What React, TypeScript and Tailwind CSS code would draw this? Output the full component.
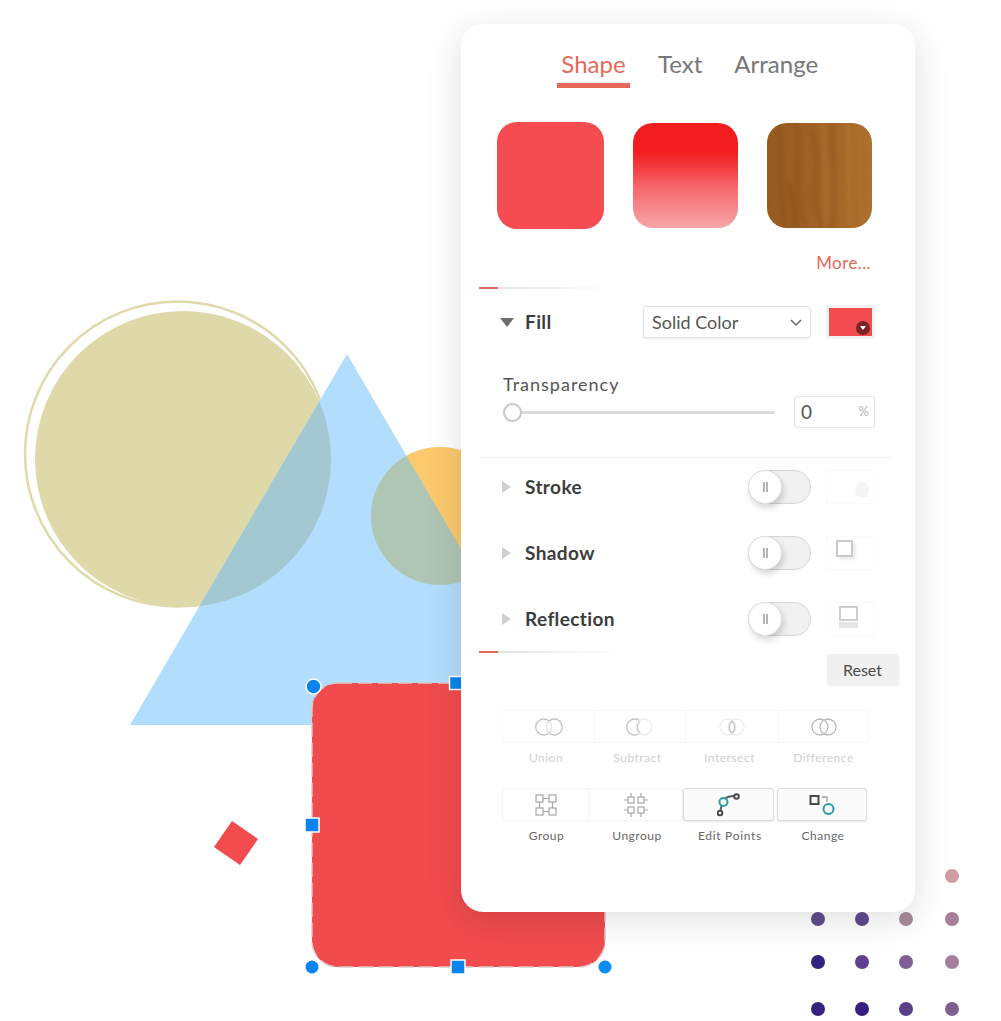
import { ReactNode } from "react";

const dots = [
  { x: 952, y: 876, c: "#cf9da2" },
  { x: 818, y: 919, c: "#5f4f8f" },
  { x: 862, y: 919, c: "#5f4a8e" },
  { x: 906, y: 919, c: "#a98a9a" },
  { x: 952, y: 919, c: "#a6809a" },
  { x: 818, y: 962, c: "#33227f" },
  { x: 862, y: 962, c: "#5f3f8f" },
  { x: 906, y: 962, c: "#7f5f95" },
  { x: 952, y: 962, c: "#a6809a" },
  { x: 818, y: 1009, c: "#35237f" },
  { x: 862, y: 1009, c: "#35207f" },
  { x: 906, y: 1009, c: "#5a4088" },
  { x: 952, y: 1009, c: "#80608f" },
];

function Canvas() {
  return (
    <svg className="absolute left-0 top-0" width="1001" height="1021" viewBox="0 0 1001 1021">
      <defs>
        <clipPath id="tri">
          <polygon points="347,354 564,725 130,725" />
        </clipPath>
      </defs>
      <circle cx="177.500" cy="454" r="152.500" fill="none" stroke="#e0d9aa" strokeWidth="2.500" />
      <circle cx="183" cy="459" r="148" fill="#dfd9a9" />
      <circle cx="440" cy="516" r="69" fill="#fcc96c" />
      <polygon points="347,354 564,725 130,725" fill="#b3ddfd" />
      <circle cx="183" cy="459" r="148" fill="#a3c8d2" clipPath="url(#tri)" />
      <circle cx="440" cy="516" r="69" fill="#b0c6b5" clipPath="url(#tri)" />
      <polygon points="232,821 258,839 240,865 214,847" fill="#f24c4f" />
      <rect x="312" y="683" width="293" height="284" rx="26" fill="#f14b4e" stroke="#d9c9c9" strokeWidth="1.500" strokeDasharray="14 6" />
      <circle cx="313.500" cy="686.500" r="7.500" fill="#0a84f0" stroke="#fff" strokeWidth="1.500" />
      <rect x="449.500" y="676.500" width="13" height="13" fill="#0a84f0" stroke="#fff" strokeWidth="1.500" />
      <rect x="305" y="818" width="14" height="14" fill="#0a84f0" stroke="#fff" strokeWidth="1.500" />
      <rect x="451" y="960" width="14" height="14" fill="#0a84f0" stroke="#fff" strokeWidth="1.500" />
      <circle cx="312" cy="967" r="6.500" fill="#0a84f0" />
      <circle cx="605" cy="967" r="6.500" fill="#0a8df5" />
      {dots.map((d) => (
        <circle key={`${d.x}-${d.y}`} cx={d.x} cy={d.y} r="7" fill={d.c} />
      ))}
    </svg>
  );
}

function WoodSwatch() {
  return (
    <svg width="105" height="105" viewBox="0 0 105 105" className="ml-[29px] rounded-[20px]">
      <defs>
        <linearGradient id="wood" x1="0" y1="0" x2="1" y2="0">
          <stop offset="0" stopColor="#955a20" />
          <stop offset="0.5" stopColor="#a06426" />
          <stop offset="1" stopColor="#ad702e" />
        </linearGradient>
        <filter id="soft">
          <feGaussianBlur stdDeviation="2" />
        </filter>
      </defs>
      <rect width="105" height="105" fill="url(#wood)" />
      <g filter="url(#soft)" fill="none" stroke="#85491a" strokeWidth="3" opacity="0.45">
        <path d="M12 0 C16 25 10 50 18 105" />
        <path d="M30 0 C34 20 24 55 38 105" />
        <path d="M44 5 C52 30 50 50 48 70 C47 85 52 95 55 105" />
        <path d="M66 0 C62 25 72 55 66 105" />
        <path d="M22 60 C26 75 30 90 28 105" strokeWidth="5" />
      </g>
      <g filter="url(#soft)" fill="none" stroke="#b97c38" strokeWidth="3" opacity="0.45">
        <path d="M56 0 C58 30 60 60 58 105" />
        <path d="M80 0 C84 30 78 70 84 105" />
        <path d="M92 10 C94 40 90 70 96 105" />
      </g>
    </svg>
  );
}

function RowLabel({ label, open }: { label: string; open?: boolean }) {
  return (
    <div className="flex items-center">
      {open ? (
        <span className="ml-[39px] h-0 w-0 border-x-[7px] border-t-[9px] border-x-transparent border-t-[#6e6e6e]" />
      ) : (
        <span className="ml-[41px] h-0 w-0 border-y-[6px] border-l-[9px] border-y-transparent border-l-[#cfcfcf]" />
      )}
      <span className={`${open ? "ml-[11px]" : "ml-[14px]"} pb-[2px] text-[19px] font-bold leading-none tracking-[0.4px] text-[#3c3c3c]`}>{label}</span>
    </div>
  );
}

function Toggle() {
  return (
    <div className="relative h-[34px] w-[63px] rounded-full border border-[#d6d6d6] bg-[#f1f1f1]">
      <div className="absolute -left-px -top-px flex h-[34px] w-[34px] items-center justify-center rounded-full border border-[#dedede] bg-white shadow-[2px_4px_6px_rgba(0,0,0,0.16)]">
        <span className="h-[10px] w-[5px] border-x-2 border-[#b5b5b5]" />
      </div>
    </div>
  );
}

function Preview({ children }: { children: ReactNode }) {
  return (
    <div className="ml-[15px] flex h-[34px] w-[49px] rounded-[2px] border border-[#f9f9f9]">
      {children}
    </div>
  );
}

function EffectRow({ label, children, className }: { label: string; children: ReactNode; className: string }) {
  return (
    <div className={`flex h-[34px] items-center justify-between pr-[40px] ${className}`}>
      <RowLabel label={label} />
      <div className="flex items-center">
        <Toggle />
        <Preview>{children}</Preview>
      </div>
    </div>
  );
}

function Divider({ width, className }: { width: string; className: string }) {
  return (
    <div className={`ml-[18px] flex h-[2px] ${width} ${className}`}>
      <div className="w-[19px] bg-[#e5685a]" />
      <div className="flex-1 bg-gradient-to-r from-[#e4e4e4] to-transparent" />
    </div>
  );
}

const T = "#c4c4c4";

function UnionIcon() {
  return (
    <svg width="28" height="18" viewBox="0 0 28 18" fill="none" stroke={T} strokeWidth="1.300">
      <path d="M14 3 A8 8 0 1 0 14 15 A8 8 0 1 0 14 3" />
      <path d="M14 3 A8 8 0 0 0 14 15 A8 8 0 0 0 14 3" stroke="#e2e2e2" />
    </svg>
  );
}

function SubtractIcon() {
  return (
    <svg width="28" height="18" viewBox="0 0 28 18" fill="none" stroke={T} strokeWidth="1.300">
      <path d="M14 3 A8 8 0 1 0 14 15 A8 8 0 0 1 14 3" />
      <circle cx="18" cy="9" r="8" stroke="#ececec" />
    </svg>
  );
}

function IntersectIcon() {
  return (
    <svg width="28" height="18" viewBox="0 0 28 18" fill="none" stroke="#ececec" strokeWidth="1.300">
      <circle cx="10" cy="9" r="8" />
      <circle cx="18" cy="9" r="8" />
      <path d="M14 3 A8 8 0 0 1 14 15 A8 8 0 0 1 14 3" stroke={T} />
    </svg>
  );
}

function DifferenceIcon() {
  return (
    <svg width="28" height="18" viewBox="0 0 28 18" fill="none" stroke="#b8b8b8" strokeWidth="1.300">
      <circle cx="10" cy="9" r="8" />
      <circle cx="18" cy="9" r="8" />
    </svg>
  );
}

function GroupIcon() {
  return (
    <svg width="22" height="22" viewBox="0 0 22 22" fill="none" stroke="#a6a6a6" strokeWidth="1.200">
      <rect x="1" y="1" width="7" height="7" />
      <rect x="14" y="1" width="7" height="7" />
      <rect x="1" y="14" width="7" height="7" />
      <rect x="14" y="14" width="7" height="7" />
      <path d="M8 4.500 H14 M8 17.500 H14 M4.500 8 V14 M17.500 8 V14" />
    </svg>
  );
}

function UngroupIcon() {
  return (
    <svg width="26" height="26" viewBox="0 0 26 26" fill="none" stroke="#a6a6a6" strokeWidth="1.200">
      <rect x="5" y="5" width="6" height="6" />
      <rect x="15" y="5" width="6" height="6" />
      <rect x="5" y="15" width="6" height="6" />
      <rect x="15" y="15" width="6" height="6" />
      <path d="M1 8 H5 M21 8 H25 M1 18 H5 M21 18 H25 M8 1 V5 M18 1 V5 M8 21 V25 M18 21 V25" />
    </svg>
  );
}

function EditPointsIcon() {
  return (
    <svg width="24" height="24" viewBox="0 0 24 24" fill="none" strokeWidth="2">
      <path d="M8 6 C10 4 14 3 17 3 M4.500 13 L3.500 17" stroke="#5b5b5b" />
      <circle cx="6.500" cy="9" r="4" stroke="#2c9aa5" />
      <circle cx="19.500" cy="3.500" r="2.300" stroke="#4a4a4a" />
      <circle cx="3" cy="20" r="2.300" stroke="#4a4a4a" />
    </svg>
  );
}

function ChangeIcon() {
  return (
    <svg width="26" height="22" viewBox="0 0 26 22" fill="none" strokeWidth="2">
      <rect x="1.500" y="2" width="8" height="8" stroke="#4a4a4a" />
      <path d="M13 3 H18 V8" stroke="#a0a0a0" strokeWidth="1.300" />
      <circle cx="19.500" cy="15" r="5" stroke="#2c9aa5" />
    </svg>
  );
}

const faded = [
  { label: "Union", icon: <UnionIcon />, w: "w-[92px]" },
  { label: "Subtract", icon: <SubtractIcon />, w: "w-[91px]" },
  { label: "Intersect", icon: <IntersectIcon />, w: "w-[93px]" },
  { label: "Difference", icon: <DifferenceIcon />, w: "w-[91px]" },
];

function Panel() {
  return (
    <div className="absolute left-[461px] top-[24px] h-[888px] w-[454px] rounded-[22px] bg-white pt-[24px] font-['Lato',sans-serif] shadow-[0_8px_36px_rgba(0,0,0,0.13)]">
      <div className="ml-[96px] flex h-[40px] text-[24px] leading-[32px] text-[#777]">
        <div className="flex w-[73px] justify-center border-b-[5px] border-[#e5685a] text-[#e5685a]">Shape</div>
        <div className="ml-[28px]">Text</div>
        <div className="ml-[32px]">Arrange</div>
      </div>

      <div className="ml-[36px] mt-[34px] flex h-[107px] items-center">
        <div className="h-[107px] w-[107px] rounded-[20px] bg-[#f44c50]" />
        <div className="ml-[29px] h-[105px] w-[105px] rounded-[20px] bg-[linear-gradient(#f21d1f_0%,#f21d1f_28%,#f6696e_62%,#f7a6a9_100%)]" />
        <WoodSwatch />
      </div>

      <div className="mt-[22px] flex h-[24px] items-center justify-end pr-[44px] text-[17px] tracking-[0.4px] text-[#e5685a]">More...</div>

      <Divider width="w-[136px]" className="mt-[12px]" />

      <div className="mt-[16px] flex h-[34px] items-center justify-between pr-[40px]">
        <RowLabel label="Fill" open />
        <div className="flex items-center">
          <div className="flex h-[32px] w-[168px] items-center justify-between rounded-[3px] border border-[#e2e2e2] pl-[8px] pr-[7px] text-[18px] text-[#555] shadow-[0_1px_2px_rgba(0,0,0,0.08)]">
            Solid Color
            <svg width="14" height="14" viewBox="0 0 14 14" fill="none" stroke="#666" strokeWidth="1.500">
              <path d="M2 5 L7 10 L12 5" />
            </svg>
          </div>
          <div className="relative ml-[15px] h-[34px] w-[49px] border-[3px] border-[#f2f2f2] bg-[#f24c50]">
            <span className="absolute bottom-[1px] right-[2px] flex h-[14px] w-[14px] items-center justify-center rounded-full bg-[#7c2326]">
              <span className="h-0 w-0 border-x-[3.500px] border-t-[4px] border-x-transparent border-t-white" />
            </span>
          </div>
        </div>
      </div>

      <div className="ml-[42px] mt-[33px] flex h-[24px] items-center text-[18px] tracking-[1px] text-[#555]">Transparency</div>
      <div className="flex h-[32px] items-center pl-[42px] pr-[40px]">
        <div className="relative h-[3px] w-[272px] rounded-full bg-[#dcdcdc]">
          <div className="absolute -top-[8px] left-0 h-[19px] w-[19px] rounded-full border-2 border-[#c9c9c9] bg-white" />
        </div>
        <div className="ml-[19px] flex h-[32px] w-[81px] items-center justify-between rounded-[2px] border border-[#e2e2e2] pl-[6px] pr-[5px] text-[19px] text-[#555]">
          0
          <span className="text-[13px] text-[#b5b5b5]">%</span>
        </div>
      </div>

      <div className="ml-[19px] mt-[29px] h-px w-[412px] bg-[#eeeeee]" />

      <EffectRow label="Stroke" className="mt-[12px]">
        <span className="ml-[28px] mt-[11px] h-[16px] w-[14px] rounded-full bg-[#f5f5f5]" />
      </EffectRow>
      <EffectRow label="Shadow" className="mt-[32px]">
        <span className="ml-[9px] mt-[3px] h-[17px] w-[17px] border-2 border-[#c9c9c9] bg-white shadow-[3px_3px_2px_#eeeeee]" />
      </EffectRow>
      <EffectRow label="Reflection" className="mt-[32px]">
        <div className="ml-[12px] mt-[3px]">
          <div className="h-[15px] w-[19px] border-2 border-[#cfcfcf]" />
          <div className="mt-px h-[6px] w-[19px] bg-[#e6e6e6]" />
        </div>
      </EffectRow>

      <Divider width="w-[146px]" className="mt-[15px]" />

      <div className="relative mt-[1px] h-[31px]">
        <button className="absolute left-[366px] top-0 h-[31px] w-[71px] rounded-[3px] bg-[#f0f0f0] text-[16px] text-[#4a4a4a] shadow-[1px_1px_3px_rgba(0,0,0,0.08)]">
          Reset
        </button>
      </div>

      <div className="ml-[41px] mt-[25px] flex">
        {faded.map((f, i) => (
          <div key={f.label} className={`flex flex-col items-center ${f.w}`}>
            <div className={`flex h-[33px] w-full items-center justify-center border-y border-l border-[#f7f7f7] ${i === 3 ? "border-r" : ""}`}>
              {f.icon}
            </div>
            <span className={`mt-[7px] h-[16px] text-[12px] leading-[16px] tracking-[0.5px] text-[#cfcfcf] ${i < 3 ? "pr-[4px]" : ""}`}>{f.label}</span>
          </div>
        ))}
      </div>

      <div className="ml-[41px] mt-[22px] flex">
        <div className="flex w-[87px] flex-col items-center">
          <div className="flex h-[33px] w-full items-center justify-center rounded-l-[3px] border border-[#f2f2f2]">
            <GroupIcon />
          </div>
          <span className="mt-[7px] h-[16px] pl-[2px] text-[12px] leading-[16px] tracking-[0.5px] text-[#666]">Group</span>
        </div>
        <div className="flex w-[94px] flex-col items-center">
          <div className="flex h-[33px] w-full items-center justify-center rounded-r-[3px] border border-l-0 border-[#f2f2f2]">
            <UngroupIcon />
          </div>
          <span className="mt-[7px] h-[16px] pl-[2px] text-[12px] leading-[16px] tracking-[0.5px] text-[#666]">Ungroup</span>
        </div>
        <div className="flex w-[91px] flex-col items-center">
          <div className="flex h-[33px] w-full items-center justify-center rounded-[3px] border border-[#dddddd] bg-[#fbfbfb] shadow-[0_1px_2px_rgba(0,0,0,0.1)]">
            <EditPointsIcon />
          </div>
          <span className="mt-[7px] h-[16px] pl-[3px] text-[12px] leading-[16px] tracking-[0.7px] text-[#666]">Edit Points</span>
        </div>
        <div className="ml-[3px] flex w-[90px] flex-col items-center">
          <div className="flex h-[33px] w-full items-center justify-center rounded-[3px] border border-[#dddddd] bg-[#fbfbfb] shadow-[0_1px_2px_rgba(0,0,0,0.1)]">
            <ChangeIcon />
          </div>
          <span className="mt-[7px] h-[16px] pl-[2px] text-[12px] leading-[16px] tracking-[0.5px] text-[#666]">Change</span>
        </div>
      </div>
    </div>
  );
}

export default function App() {
  return (
    <div className="relative h-[1021px] w-[1001px] overflow-hidden bg-white">
      <Canvas />
      <Panel />
    </div>
  );
}
